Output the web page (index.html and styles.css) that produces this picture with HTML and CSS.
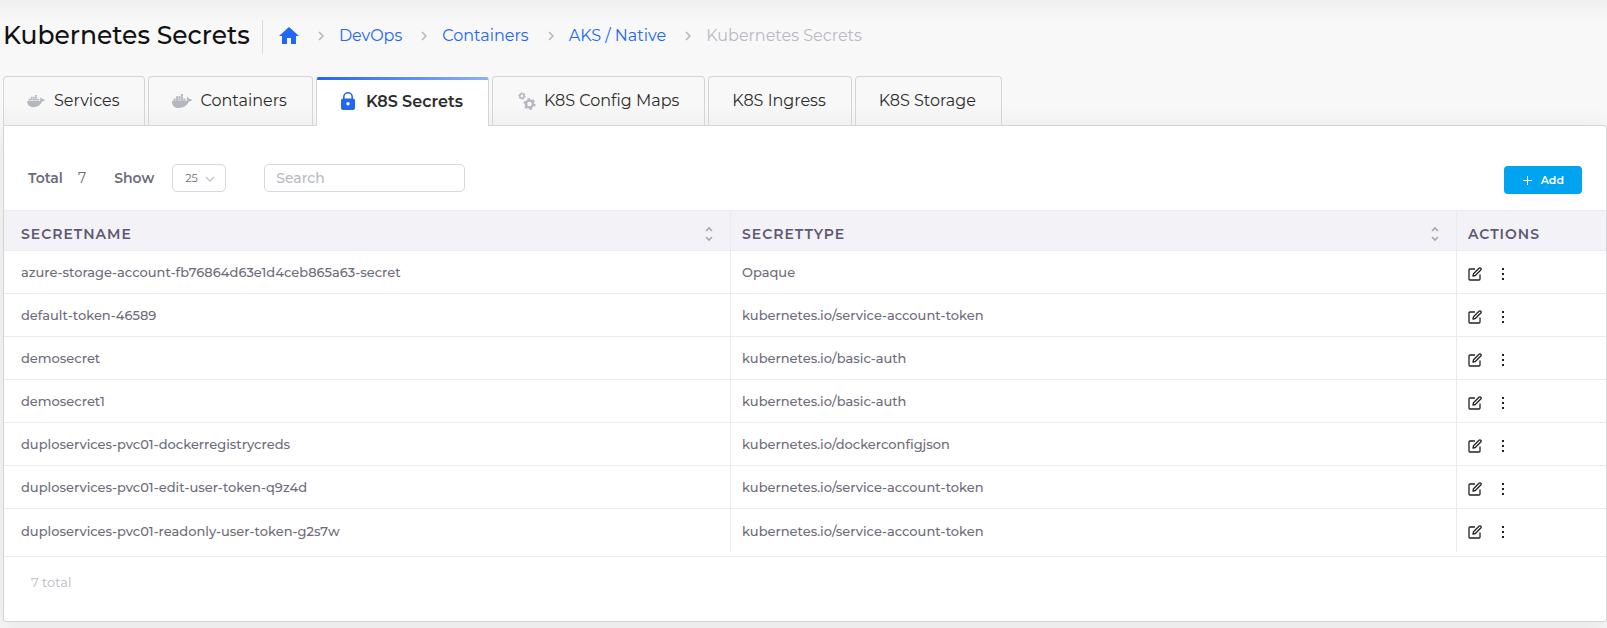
FILE: index.html
```html
<!DOCTYPE html>
<html lang="en">
<head>
<meta charset="utf-8">
<meta name="viewport" content="width=device-width, initial-scale=1">
<title>Kubernetes Secrets</title>
<link rel="stylesheet" href="styles.css">
</head>
<body>
<svg class="sprite" aria-hidden="true">
  <symbol id="whale" viewBox="0 0 640 512"><path fill="currentColor" d="M349.900 236.300h-66.100v-59.400h66.100v59.400zm0-204.300h-66.100v60.700h66.100V32zm78.200 144.800H362v59.400h66.100v-59.400zm-156.300-72.100h-66.100v60.100h66.100v-60.100zm78.100 0h-66.100v60.100h66.100v-60.100zm276.800 100c-14.400-9.700-47.600-13.200-73.100-8.400-3.300-24-16.700-44.900-41.100-63.700l-14-9.300-9.300 14c-18.400 27.800-23.400 73.600-3.700 103.800-8.700 4.700-25.800 11.100-48.400 10.700H2.400c-8.700 50.800 5.800 116.800 44 162.100 37.100 43.900 92.700 66.200 165.400 66.200 157.400 0 273.900-72.500 328.400-204.200 21.400.4 67.600.1 91.300-45.200 1.500-2.500 6.600-13.200 8.500-17.100l-13.300-8.900zm-511.100-27.900h-66v59.400h66.100v-59.400zm78.100 0h-66.100v59.400h66.100v-59.400zm78.100 0h-66.100v59.400h66.100v-59.400zm-78.100-72.100h-66.100v60.100h66.100v-60.100z"/></symbol>
  <symbol id="lock" viewBox="0 0 14 18"><path fill="currentColor" fill-rule="evenodd" d="M2 6.500V5a5 5 0 0 1 10 0v1.500a2 2 0 0 1 2 2V16a2 2 0 0 1-2 2H2a2 2 0 0 1-2-2V8.500a2 2 0 0 1 2-2zm1.600 0h6.800V5a3.400 3.400 0 0 0-6.800 0zM7 10a1.700 1.700 0 1 0 0 3.400A1.700 1.700 0 0 0 7 10z"/></symbol>
  <symbol id="gears" viewBox="0 0 18 18"><g fill="none" stroke="currentColor"><circle cx="4" cy="4" r="2.200" stroke-width="1.500"/><circle cx="4" cy="4" r="3.300" stroke-width="1" stroke-dasharray="1.500 1.956"/><circle cx="11.500" cy="12" r="3.500" stroke-width="2.400"/><circle cx="11.500" cy="12" r="5.200" stroke-width="1.700" stroke-dasharray="2.400 3.045"/></g></symbol>
  <symbol id="home" viewBox="0 0 20 17"><path fill="currentColor" d="M8 17v-6h4v6h5V9h3L10 0 0 9h3v8z"/></symbol>
  <symbol id="chevron" viewBox="0 0 6 10"><path fill="none" stroke="currentColor" stroke-width="1.500" d="m1 1 4 4-4 4"/></symbol>
  <symbol id="sort" viewBox="0 0 8 14"><path fill="none" stroke="currentColor" stroke-width="1.700" d="m1 4 3-3 3 3M1 10l3 3 3-3"/></symbol>
  <symbol id="edit" viewBox="0 0 14 14"><path fill="none" stroke="currentColor" stroke-width="1.300" stroke-linecap="round" stroke-linejoin="round" d="M6.500 2H2Q1 2 1 3v9q0 1 1 1h9q1 0 1-1V8M5 9l.5-2.300L11 1.200a1.200 1.200 0 0 1 1.800 1.800L7.300 8.500z"/></symbol>
  <symbol id="dots" viewBox="0 0 4 12"><path fill="currentColor" d="M1 0h2v2H1zM1 5h2v2H1zM1 10h2v2H1z"/></symbol>
</svg>

<header class="page-head">
  <h1 class="title">Kubernetes Secrets</h1>
  <nav class="crumbs" aria-label="Breadcrumb">
    <a href="#" aria-label="Home"><svg class="home"><use href="#home"/></svg></a>
    <svg class="sep"><use href="#chevron"/></svg>
    <a href="#">DevOps</a>
    <svg class="sep"><use href="#chevron"/></svg>
    <a href="#">Containers</a>
    <svg class="sep"><use href="#chevron"/></svg>
    <a href="#">AKS / Native</a>
    <svg class="sep"><use href="#chevron"/></svg>
    <span class="here">Kubernetes Secrets</span>
  </nav>
</header>

<nav class="tabs" aria-label="Kubernetes">
  <a class="tab" href="#"><svg class="whale-small"><use href="#whale"/></svg>Services</a>
  <a class="tab" href="#"><svg class="whale"><use href="#whale"/></svg>Containers</a>
  <a class="tab active" href="#" aria-current="page"><svg class="lock"><use href="#lock"/></svg>K8S Secrets</a>
  <a class="tab" href="#"><svg class="gears"><use href="#gears"/></svg>K8S Config Maps</a>
  <a class="tab" href="#">K8S Ingress</a>
  <a class="tab" href="#">K8S Storage</a>
</nav>

<main class="panel">
  <div class="toolbar">
    <span class="label">Total</span><span class="count">7</span>
    <label class="label" for="size">Show</label>
    <span class="select-wrap">
      <select id="size" class="size"><option>25</option><option>50</option></select>
      <svg class="caret"><use href="#chevron"/></svg>
    </span>
    <input class="search" type="text" placeholder="Search" aria-label="Search">
    <button class="add" type="button"><svg class="plus" viewBox="0 0 9 9"><path stroke="currentColor" d="M4.500 0v9M0 4.500h9"/></svg>Add</button>
  </div>

  <table class="grid">
    <thead>
      <tr>
        <th><div class="head">SECRETNAME<svg class="sort"><use href="#sort"/></svg></div></th>
        <th><div class="head">SECRETTYPE<svg class="sort"><use href="#sort"/></svg></div></th>
        <th class="col-actions"><div class="head">ACTIONS</div></th>
      </tr>
    </thead>
    <tbody>
      <tr><td>azure-storage-account-fb76864d63e1d4ceb865a63-secret</td><td>Opaque</td><td><div class="actions"><button type="button" aria-label="Edit"><svg class="edit"><use href="#edit"/></svg></button><button type="button" aria-label="More"><svg class="dots"><use href="#dots"/></svg></button></div></td></tr>
      <tr><td>default-token-46589</td><td>kubernetes.io/service-account-token</td><td><div class="actions"><button type="button" aria-label="Edit"><svg class="edit"><use href="#edit"/></svg></button><button type="button" aria-label="More"><svg class="dots"><use href="#dots"/></svg></button></div></td></tr>
      <tr><td>demosecret</td><td>kubernetes.io/basic-auth</td><td><div class="actions"><button type="button" aria-label="Edit"><svg class="edit"><use href="#edit"/></svg></button><button type="button" aria-label="More"><svg class="dots"><use href="#dots"/></svg></button></div></td></tr>
      <tr><td>demosecret1</td><td>kubernetes.io/basic-auth</td><td><div class="actions"><button type="button" aria-label="Edit"><svg class="edit"><use href="#edit"/></svg></button><button type="button" aria-label="More"><svg class="dots"><use href="#dots"/></svg></button></div></td></tr>
      <tr><td>duploservices-pvc01-dockerregistrycreds</td><td>kubernetes.io/dockerconfigjson</td><td><div class="actions"><button type="button" aria-label="Edit"><svg class="edit"><use href="#edit"/></svg></button><button type="button" aria-label="More"><svg class="dots"><use href="#dots"/></svg></button></div></td></tr>
      <tr><td>duploservices-pvc01-edit-user-token-q9z4d</td><td>kubernetes.io/service-account-token</td><td><div class="actions"><button type="button" aria-label="Edit"><svg class="edit"><use href="#edit"/></svg></button><button type="button" aria-label="More"><svg class="dots"><use href="#dots"/></svg></button></div></td></tr>
      <tr><td>duploservices-pvc01-readonly-user-token-g2s7w</td><td>kubernetes.io/service-account-token</td><td><div class="actions"><button type="button" aria-label="Edit"><svg class="edit"><use href="#edit"/></svg></button><button type="button" aria-label="More"><svg class="dots"><use href="#dots"/></svg></button></div></td></tr>
    </tbody>
  </table>
  <footer class="summary">7 total</footer>
</main>
</body>
</html>
```
FILE: styles.css
```css
* { box-sizing: border-box; }

body {
  margin: 0;
  padding: 20px 0 7px 3px;
  background: #f8f8f8 linear-gradient(#efefef, #f8f8f8) no-repeat top / 100% 22px;
  font-family: Montserrat, Inter, sans-serif;
  font-size: 14px;
  color: #6e6b7b;
}

a { color: #2166f5; text-decoration: none; }
svg { flex: none; display: block; }
.sprite { position: absolute; width: 0; height: 0; }

.page-head { display: flex; align-items: center; }
.title {
  margin: 0;
  padding: 0 12px 4px 0;
  min-width: 259px;
  border-right: 1px solid #d6dce1;
  font-size: 25px;
  line-height: 30px;
  font-weight: 500;
  color: #111;
  white-space: nowrap;
}
.crumbs { display: flex; align-items: center; padding: 0 0 3px 16px; font-size: 16px; line-height: 24px; white-space: nowrap; }
.home { width: 20px; height: 17px; }
.sep { width: 6px; height: 10px; margin: 0 15px 0 19px; color: #b5b5bc; }
.here { color: #b9b9c3; }

.tabs { display: flex; gap: 3px; margin-top: 22px; }
.tab {
  display: flex;
  align-items: center;
  height: 49px;
  padding: 0 25px 1px 23px;
  border: 1px solid #d5d5d5;
  border-bottom: 0;
  border-radius: 4px 4px 0 0;
  background: linear-gradient(#f8f8f8 60%, #f1f1f1);
  color: #2c2c2c;
  font-size: 16px;
  white-space: nowrap;
}
.tab.active {
  position: relative;
  z-index: 1;
  height: 50px;
  margin-bottom: -1px;
  border-top-color: transparent;
  background: linear-gradient(90deg, #2166f5, #8caffa) no-repeat top / 100% 3px #fff;
  font-weight: 600;
}
.whale-small { width: 18px; height: 14px; margin-right: 9px; color: #b4b7bd; }
.whale { width: 20px; height: 16px; margin-right: 8px; color: #b4b7bd; }
.lock { width: 14px; height: 18px; margin: 0 11px 0 1px; color: #2166f5; }
.gears { width: 18px; height: 18px; margin: 0 8px 0 2px; color: #b4b7bd; }

.panel {
  border: 1px solid #d5d5d5;
  border-radius: 0 3px 3px 3px;
  background: #fff;
  box-shadow: 0 4px 24px rgba(34, 41, 47, 0.1);
}
.toolbar { display: flex; align-items: center; padding: 38px 24px 18px; }
.label { font-weight: 600; font-size: 14px; }
.count { margin: 0 28px 0 15px; }
.select-wrap { position: relative; margin: 0 38px 0 18px; }
.size, .search {
  display: block;
  height: 28px;
  border: 1px solid #d8d6de;
  border-radius: 5px;
  background: #fff;
  color: #6e6b7b;
  font: 14px Montserrat, Inter, sans-serif;
}
.size { width: 54px; padding: 0 12px; font-size: 11px; appearance: none; }
.caret { position: absolute; right: 13px; top: 10px; width: 6px; height: 10px; color: #c9c7d0; transform: rotate(90deg); }
.search { width: 201px; padding: 0 11px; font-weight: 500; }
.search::placeholder { color: #b9b9c3; }
.add {
  display: flex;
  align-items: center;
  gap: 9px;
  height: 28px;
  margin: 2px 0 -2px auto;
  padding: 0 18px 0 19px;
  border: 0;
  border-radius: 4px;
  background: #00a3f0;
  color: #fff;
  font: 600 11px Montserrat, Inter, sans-serif;
}
.plus { width: 9px; height: 9px; }

.grid { width: 100%; table-layout: fixed; border-collapse: separate; border-spacing: 0; }
.grid th { height: 41px; padding: 6px 17px 0 11px; border-top: 1px solid #ebe9f1; border-bottom: 1px solid #ebe9f1; background: #f3f2f7; text-align: left; }
.grid td { height: 43px; padding: 0 11px; border-bottom: 1px solid #ebe9f1; font-size: 13px; font-weight: 500; }
.grid th + th, .grid td + td { border-left: 1px solid #ebe9f1; }
.grid th:first-child, .grid td:first-child { padding-left: 17px; }
.grid tbody tr:last-child td { border-bottom: 0; }
.grid .col-actions { width: 150px; }
.head { display: flex; align-items: center; justify-content: space-between; font-size: 14px; font-weight: 600; letter-spacing: 1px; color: #5e5873; }
.sort { width: 8px; height: 14px; color: #a8a6b2; }
.actions { display: flex; align-items: center; gap: 19px; padding-top: 3px; }
.actions button { display: block; padding: 0; border: 0; background: none; color: #222; }
.edit { width: 14px; height: 14px; }
.dots { width: 4px; height: 12px; }

.summary { margin-top: 4px; padding: 16px 27px 30px; border-top: 1px solid #ebe9f1; font-size: 13px; line-height: 18px; color: #b9b9c3; }
```
